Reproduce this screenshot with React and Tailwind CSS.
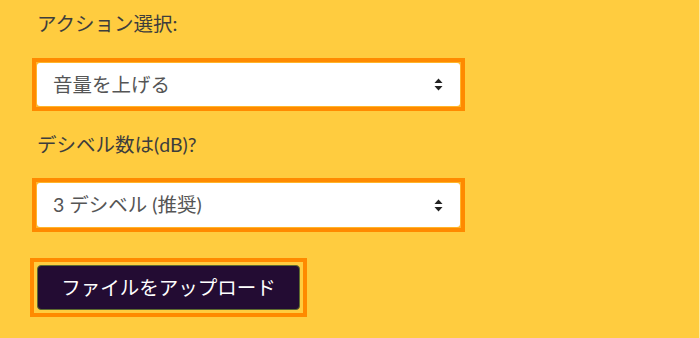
import React from 'react';

const Arrows = () => (
  <svg width="9" height="13" viewBox="0 0 9 13" className="shrink-0">
    <path d="M4.5 0.5 L8.5 5 L0.5 5 Z" fill="#222" />
    <path d="M4.5 12.5 L8.5 8 L0.5 8 Z" fill="#222" />
  </svg>
);

// orange square frame around a slightly rounded white select box
const FakeSelect = ({ value, className = '', h }) => (
  <div className={`w-fit -ml-[5px] border-4 border-[#ff8a00] bg-[#ffb52a] p-px ${className}`}>
    <div
      className={`w-[423px] ${h} bg-white rounded-[3px] flex items-center justify-between pl-4 pr-[17px] text-[19.5px] text-[#555]`}
    >
      <span>{value}</span>
      <Arrows />
    </div>
  </div>
);

const App = () => {
  return (
    <div
      className="w-full h-[338px] bg-[#ffcc3f] border-r border-[#ffe8a0] pl-[37px] pt-[12px] overflow-hidden"
      style={{ fontFamily: "Lato, 'Noto Sans CJK JP', sans-serif" }}
    >
      <div className="text-[19.5px] leading-6 text-[#3d3d3d]">アクション選択:</div>

      <FakeSelect value="音量を上げる" className="mt-[22px]" h="h-[43px]" />

      <div className="mt-[22px] text-[19.5px] leading-6 text-[#3d3d3d]">デシベル数は(dB)?</div>

      <FakeSelect value="3 デシベル (推奨)" className="mt-[21px]" h="h-[44px]" />

      <div className="mt-[26px] -ml-[7px] w-fit border-4 border-[#ff8a00] p-[3px]">
        <button className="block w-[263px] h-[45px] bg-[#230c33] border border-[#5d6b2e] rounded-[4px] text-white text-[19.5px]">
          ファイルをアップロード
        </button>
      </div>
    </div>
  );
};

export default App;
